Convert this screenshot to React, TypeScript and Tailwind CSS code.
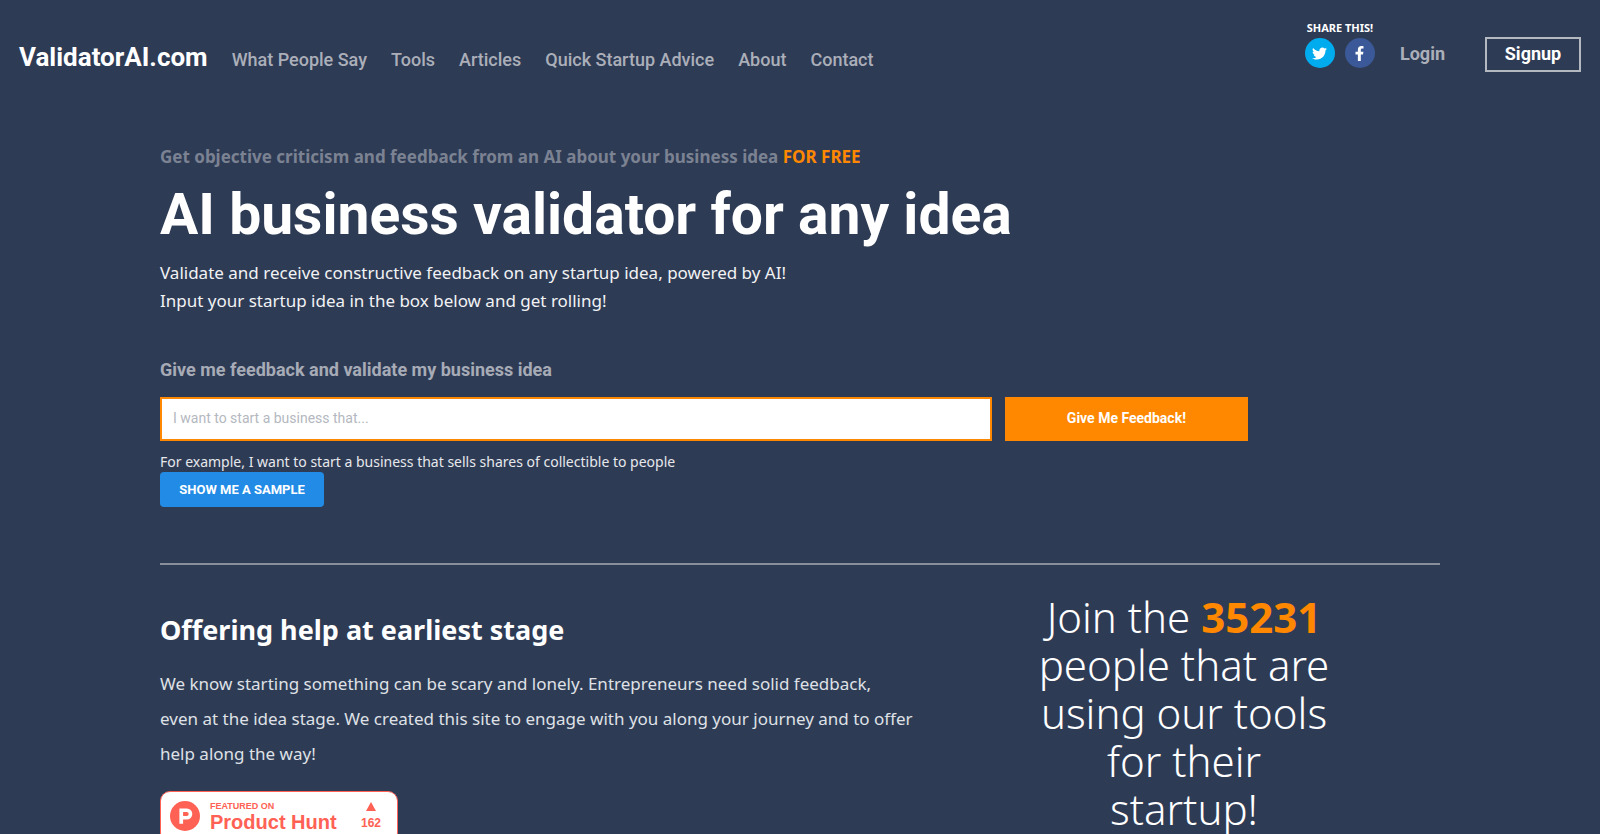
import { FaFacebookF, FaTwitter } from "react-icons/fa";

const navItems = ["What People Say", "Tools", "Articles", "Quick Startup Advice", "About", "Contact"];

function Header() {
  return (
    <header className="flex items-start justify-between px-[19px] pt-5 font-[Roboto,sans-serif]">
      <div className="flex items-baseline pt-[19px]">
        <a href="#" className="text-[26px] leading-9 font-bold text-white">
          ValidatorAI.com
        </a>
        <nav className="ml-6 flex gap-6 text-lg leading-9 font-medium text-[#abafb9]">
          {navItems.map((item) => (
            <a key={item} href="#">
              {item}
            </a>
          ))}
        </nav>
      </div>
      <div className="flex items-start">
        <div className="flex w-[70px] flex-col">
          <span className="text-center font-['Noto_Sans',sans-serif] text-[11px] leading-4 font-bold whitespace-nowrap text-white">
            SHARE THIS!
          </span>
          <div className="mt-0.5 flex justify-between">
            <a
              href="#"
              aria-label="Twitter"
              className="flex size-[30px] items-center justify-center rounded-full bg-[#00aced] text-white"
            >
              <FaTwitter size={15} />
            </a>
            <a
              href="#"
              aria-label="Facebook"
              className="flex size-[30px] items-center justify-center rounded-full bg-[#3b5998] text-white"
            >
              <FaFacebookF size={15} />
            </a>
          </div>
        </div>
        <a href="#" className="mt-4 ml-[25px] text-lg leading-9 font-bold text-[#abafb9]">
          Login
        </a>
        <a
          href="#"
          className="mt-[17px] ml-10 flex h-[35px] w-24 justify-center border-2 border-[#b4b8c1] text-lg leading-[30px] font-bold text-white"
        >
          Signup
        </a>
      </div>
    </header>
  );
}

function Hero() {
  return (
    <section className="pt-[65px]">
      <p className="text-[17px] leading-7 font-bold text-[#7b8292]">
        Get objective criticism and feedback from an AI about your business idea{" "}
        <span className="text-[#ff8800]">FOR FREE</span>
      </p>
      <h1 className="mt-2 font-[Roboto,sans-serif] text-[57px] leading-[72px] font-bold text-white">
        AI business validator for any idea
      </h1>
      <p className="mt-2 text-[17px] leading-7 text-[#f1f2f4]">
        Validate and receive constructive feedback on any startup idea, powered by AI!
        <br />
        Input your startup idea in the box below and get rolling!
      </p>
    </section>
  );
}

function IdeaForm() {
  return (
    <form className="pt-[41px] font-[Roboto,sans-serif]" onSubmit={(event) => event.preventDefault()}>
      <label htmlFor="idea" className="block text-lg leading-7 font-bold text-[#a6abb6]">
        Give me feedback and validate my business idea
      </label>
      <div className="mt-[13px] flex gap-[1%]">
        <input
          id="idea"
          type="text"
          placeholder="I want to start a business that..."
          className="h-11 w-[65%] border-2 border-[#ff8800] bg-white px-[11px] pb-0.5 text-sm text-gray-800 placeholder:text-[#b4b8bf]"
        />
        <button type="submit" className="h-11 w-[19%] bg-[#ff8800] pb-0.5 text-sm font-bold text-white">
          Give Me Feedback!
        </button>
      </div>
      <p className="mt-2.5 font-['Noto_Sans',sans-serif] text-sm leading-[21px] text-[#e6e8ec]">
        For example, I want to start a business that sells shares of collectible to people
      </p>
      <button
        type="button"
        className="block h-[35px] w-[164px] rounded bg-[#228be6] text-[13px] font-bold text-white"
      >
        SHOW ME A SAMPLE
      </button>
    </form>
  );
}

function ProductHuntBadge() {
  return (
    <a
      href="#"
      className="mt-5 flex h-[52px] w-[238px] items-center rounded-[10px] border border-[#ff6154] bg-white pr-4 pb-0.5 pl-[9px] font-['Liberation_Sans',sans-serif] font-bold text-[#ff6154]"
    >
      <svg viewBox="0 0 30 30" className="size-[30px]" aria-hidden="true">
        <circle cx="15" cy="15" r="15" fill="#ff6154" />
        <path
          d="M9.4 7.5h7.4a5.5 5.5 0 0 1 0 11h-3.7v4.2H9.4zM13.1 11v4h3.6a2 2 0 0 0 0-4z"
          fill="#fff"
          fillRule="evenodd"
        />
      </svg>
      <span className="ml-2.5 flex flex-col">
        <span className="text-[9px] leading-[11px]">FEATURED ON</span>
        <span className="text-[20px] leading-5">Product Hunt</span>
      </span>
      <span className="ml-auto flex flex-col items-center gap-1">
        <svg viewBox="0 0 10 9" className="h-[9px] w-2.5" aria-hidden="true">
          <path d="M5 0l5 9H0z" fill="#ff6154" />
        </svg>
        <span className="text-xs leading-4">162</span>
      </span>
    </a>
  );
}

export default function App() {
  return (
    <div className="min-h-screen bg-[#2e3b55] font-['Noto_Sans',sans-serif]">
      <Header />
      <main className="px-[10%]">
        <Hero />
        <IdeaForm />
        <hr className="mt-14 border-t-2 border-[#8a8f9c]" />
        <section className="flex items-start">
          <div className="w-3/5 pt-[47px]">
            <h2 className="text-[27px] leading-9 font-bold text-white">Offering help at earliest stage</h2>
            <p className="mt-[18px] text-[17px] leading-[35px] text-[#dfe1e6]">
              We know starting something can be scary and lonely. Entrepreneurs need solid feedback,
              <br />
              even at the idea stage. We created this site to engage with you along your journey and to offer
              <br />
              help along the way!
            </p>
            <ProductHuntBadge />
          </div>
          <p className="w-2/5 pt-7 text-center text-[42px] leading-[48px] font-light text-white">
            Join the <strong className="font-bold text-[#ff8800]">35231</strong>
            <br />
            people that are
            <br />
            using our tools
            <br />
            for their
            <br />
            startup!
          </p>
        </section>
      </main>
    </div>
  );
}
